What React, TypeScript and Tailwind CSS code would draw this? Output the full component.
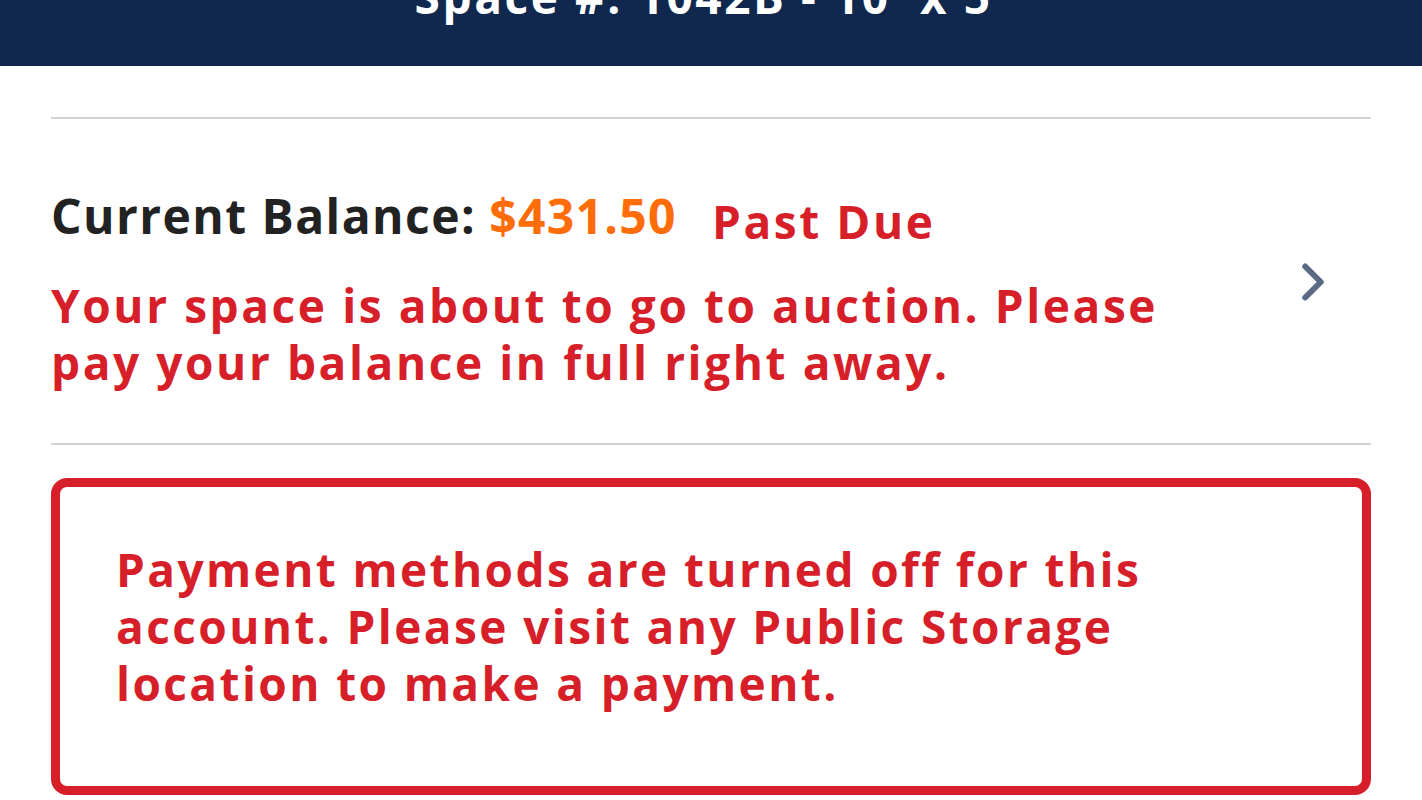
import { ChevronRight } from 'lucide-react';

const font = { fontFamily: '"Open Sans", "Liberation Sans", sans-serif' };

export default function App() {
  return (
    <div className="h-[800px] w-full overflow-hidden bg-white" style={font}>
      <header className="flex h-[66px] justify-center overflow-hidden bg-[#10284e]">
        <h1 className="-mt-[27px] text-[46px] font-bold leading-none tracking-[0.056em] text-white">Space #: 1042B - 10' x 5'</h1>
      </header>

      <main className="flex flex-col px-[51px] pt-[51px]">
        <hr className="border-t-2 border-[#d3d3d3]" />

        <button className="flex items-center justify-between pb-[52px] pt-[69px] text-left">
          <div className="flex w-[1125px] flex-col gap-[33px]">
            <div className="flex items-baseline leading-[56px]">
              <span className="text-[48px] font-bold tracking-[0.03em] text-[#222222]">Current Balance:</span>
              <span className="ml-[13px] text-[48px] font-bold tracking-[0.028em] text-[#ff6c0a]">$431.50</span>
              <span className="ml-[35px] translate-y-[5px] text-[46px] font-bold tracking-[0.056em] text-[#d71f2a]">Past Due</span>
            </div>
            <p className="text-[46px] font-bold leading-[57px] tracking-[0.056em] text-[#d71f2a]">
              Your space is about to go to auction. Please pay your balance in full right away.
            </p>
          </div>
          <ChevronRight className="mb-[16px] mr-[27px] h-[62px] w-[62px] text-[#5b6b84]" strokeWidth={2.3} />
        </button>

        <hr className="border-t-2 border-[#d3d3d3]" />

        <section className="mt-[33px] h-[317px] rounded-[16px] border-[9px] border-[#d71f2a] pl-[56px] pr-[150px] pt-[54px]">
          <p className="text-[46px] font-bold leading-[57px] tracking-[0.052em] text-[#d71f2a]">
            Payment methods are turned off for this account. Please visit any Public Storage location to make a payment.
          </p>
        </section>
      </main>
    </div>
  );
}
